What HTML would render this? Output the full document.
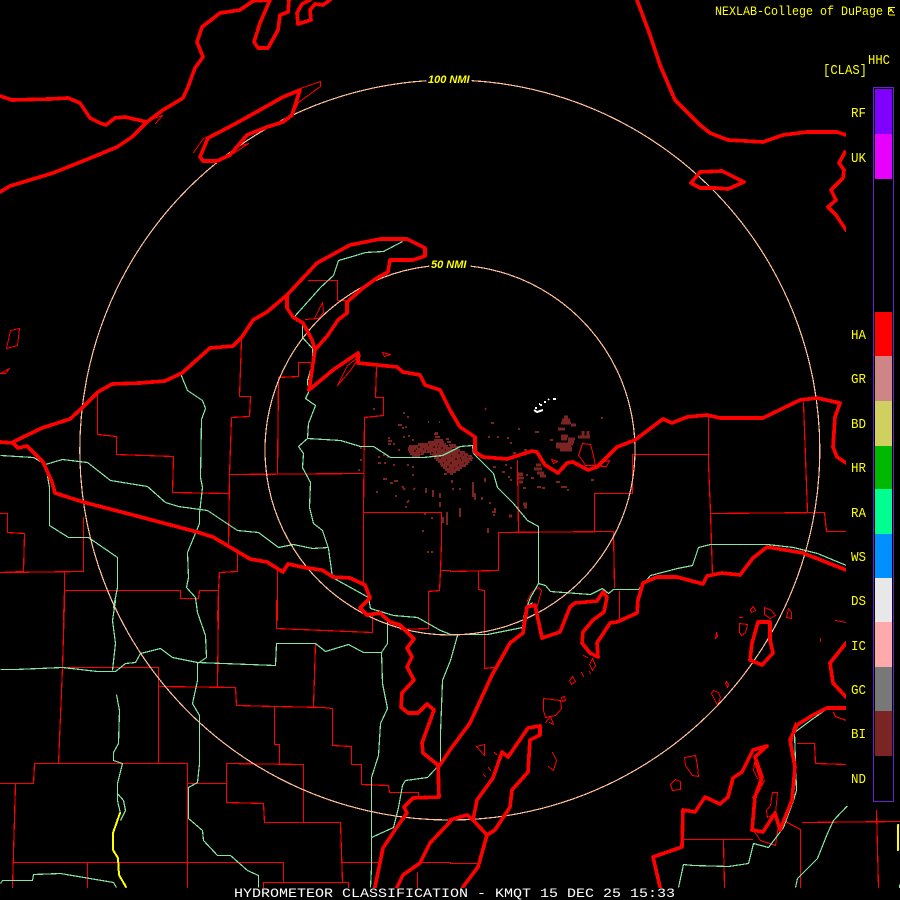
<!DOCTYPE html>
<html><head><meta charset="utf-8"><style>
html,body{margin:0;padding:0;background:#000;width:900px;height:900px;overflow:hidden}
svg{display:block;position:absolute;left:0;top:0}
text{font-family:"Liberation Mono",monospace}
</style></head><body>
<svg width="900" height="900" viewBox="0 0 900 900" xmlns="http://www.w3.org/2000/svg">
<defs><clipPath id="c"><path d="M0 0H846V806H900V888H0Z"/></clipPath></defs>
<rect width="900" height="900" fill="#000"/>
<g clip-path="url(#c)" fill="none" stroke-linejoin="round" stroke-linecap="round">

<!-- echoes -->
<g stroke="#7b2424" stroke-width="2" shape-rendering="crispEdges" stroke-linecap="butt">
<path d="M434 434H438M435 437H440M434 440H443M446 439H449M428 442H444M447 442H451M418 444H446M449 445H456M409 446H448M450 447H459M408 448H452M408 450H460M409 452H465M410 454H424M430 454H468M412 456H420M432 456H472M434 458H473M436 460H472M438 462H470M440 464H468M441 466H466M443 468H462M445 470H460M447 472H456M444 474H447M450 474H453"/>
<path stroke="#000" stroke-width="1" d="M412 445h1M418 447h2M423 449h1M414 451h2M428 445h1M433 447h2M426 451h1M438 444h1M441 448h2M436 452h1M431 453h2M445 450h1M449 452h2M454 449h1M443 455h2M451 456h1M458 453h2M463 455h1M467 457h1M439 458h2M446 460h1M455 459h2M461 460h1M469 461h1M443 463h1M450 463h2M458 465h1M464 463h1M447 467h2M454 468h1M420 453h1M444 443h1M437 447h1M416 449h1M460 458h1"/>
<path d="M383 479h4M390 483h3M394 481h4M402 486l3 4M376 492h2M395 496h2M415 488l-2 2M426 488v5M433 490v7M440 493v5M409 500l-2 3M405 507h2M440 502v5M452 480v3M460 488v2M453 488v2M473 482v15M475 493v7M482 497v3M490 502v2M493 511v2M485 478v4M493 467h3M502 472h3M510 480h2M460 508v9M447 512v13M443 517v6M425 513v2M432 517v2M423 530v2M427 552h2M431 552h2M495 508v5M493 515h2M488 528v5M518 475h5M518 478h6M537 487h4M542 488h3M523 488h3M403 413h2M407 417h2M400 425h2M405 427h2M402 428h2M428 422h1M439 422h1M435 433h3M388 438h2M388 441h4M393 444h2M388 444h3M398 450h2M403 437h2M408 436h2M412 440h2M378 457h2M383 455h2M387 457h2M378 463h3M384 463h2M393 465h2M407 465h2M412 467h2M412 475h2M360 448h2M360 460h2M358 470h2M373 409h2M398 425h2M485 410l1-2M491 423h3M518 429h2M536 432h3M488 437h2M507 438h2M510 443h2M513 453h3M508 477h2M526 475h2M531 478h3M536 469h5M536 465h4M540 473h4M505 465h2M510 468h2"/>
<path stroke-width="3" d="M564 417h4M562 420h8M561 423h10M571 425h5M558 429h7M561 436h7M561 439h6M568 439h7M568 442h6M578 437h12M583 431v5M588 431v6M556 444h17M556 447h15M560 450h12M566 448h6M536 465h5M534 469h8M537 473h7M540 476h6M518 474h5M518 478h5M519 482h4M523 504h4M524 507h3M509 516h3"/>
<path d="M550 440h3M535 432h2M524 450h3M497 437h2M591 480h3M601 418h2M556 482h4M561 487h6M567 490h2"/>
</g>
<path d="M534 410l3 2 3-1 3-1M535 408h2M540 405h2M544 402h2M548 400l1-1M553 399h3M539 404h1" stroke="#fff" stroke-width="2" shape-rendering="crispEdges" stroke-linecap="butt"/>

<!-- thin county lines -->
<g stroke="#f00" stroke-width="1.2" shape-rendering="crispEdges" stroke-linecap="square" transform="translate(.5 .5)">
<path d="M241 340L239 396H250L249 416L231 417L229 474L228 547M97 395V434L116 436V454L173 456L172 492L228 493M229 474L363 473M278 377L277 473M278 377L298 376V362H310M376 367L375 397H383V415L364 417L363 512V583M350 473H363M363 512H441V542L440 570H450M440 570L439 590L428 591V620M0 513H7V532L24 533L23 571L0 572M0 572L83 571V517M64 572V590L63 620M64 590H180V598H198L199 590H218L219 572L237 571V553M218 591L217 620M277 570V620M64 600L62 667L58 763M62 667H158V763M158 686L235 687L236 705L275 706L323 707L332 708V745L351 746V764H361V784L388 785L389 792H418V797M274 707V744H279V763M313 706L315 643M276 600V628L372 632V615M428 600V628L400 629M218 600L217 686M0 783H33L34 763H187V887M187 783H226V763M226 783V802L263 803L264 822H340L342 882M226 763L303 764V822M15 783L12 887M13 862L283 862V882H263V887M283 882H348V887M87 862V887M342 862H380M417 872V887M422 862H450M484 600V668L493 667M450 863H478M619 591V620M797 743H814L815 763L846 764M833 712L835 716L846 720M683 839H752M723 840L724 887M783 820L800 829V887M802 822L900 821M876 810L878 887M708 417V463L710 512L712 575M632 454H708M632 454V493M594 493H632M594 493V531M498 532L613 531L614 587M498 532V570L450 571M478 571V589L484 590V620M517 460L518 531M803 402L807 512M710 513L824 512L826 531H846M308 280H337V300H347"/>
<path stroke-width="1" d="M193 152L203 138L208 136M300 88L320 81V86L298 102L293 113M240 145L248 143L233 153M12 100L0 95M145 121L162 115L155 123M132 137L118 146M100 155L93 157M337 385L350 370L360 355L347 365ZM314 318L322 302L323 312L318 318L305 319"/>
<path stroke-width="1" d="M10 330L19 328L17 345L6 348ZM0 373L9 368L5 373Z"/>
<path stroke-width="1" d="M382 352L390 354L384 356ZM578 455L582 443L590 444L593 455L595 465L585 465L582 460ZM551 459L553 463L557 461ZM601 462L609 460L606 466L601 466Z"/>
<path stroke-width="1" d="M543 698L560 700L561 708L555 715L545 717L543 710ZM564 696L565 700L562 701L561 697ZM545 722L550 716L553 724L549 722M476 746L484 744L484 755ZM494 752L496 754M488 767L490 770M483 774L485 776M684 757L695 755L697 765L698 776L692 775L685 765ZM675 779L680 781L680 789L672 790L670 784ZM713 690L718 692L720 697L717 705L711 693ZM726 681L728 684L727 687L725 683ZM739 623L747 624L745 632L741 635L739 632ZM764 607L771 610L775 615L770 618L764 614ZM788 608L791 612L791 618L786 617ZM753 606L755 610L751 612L750 609ZM739 617L742 617M716 632L717 636L715 638ZM835 620L846 622M820 638V641M572 676L575 681L571 684L569 680ZM592 658L595 665L592 670L589 664ZM581 672L583 676M589 671L590 673M583 655L587 657M772 792L777 792L775 813L767 817L766 810L770 805ZM764 780L758 792L752 797ZM759 777L754 762L753 770L757 778ZM792 730L795 722L791 745ZM753 830L760 840L775 845L778 825M552 752L556 760L553 770L548 766M527 600L531 592L538 587L541 590L537 605L529 606Z"/>
</g>

<!-- green rivers/state lines -->
<g stroke="#83e6a2" stroke-width="1.2" shape-rendering="crispEdges" stroke-linecap="butt" transform="translate(.5 .5)">
<path d="M295 320V315L320 287L333 275L338 260L352 256L365 252L383 251L402 241M295 320L302 322V337L312 348V363L307 380L308 392L305 398L315 405L308 423L307 438L298 446L303 453L302 467L310 482L309 507L313 523L322 530L328 548L332 577L350 587L368 597L370 608L393 615L417 617L440 630L450 634H487L522 627L525 608L532 602M307 438L340 440L360 446L373 446L390 457L423 457L442 455L460 446L472 445L473 453L493 473L497 487L513 503L527 520L538 526V583L530 597L527 605L523 617M538 583L545 585L550 591L590 594L602 588L608 593L613 589H638L650 575L677 568L692 565L698 547L710 544H767L793 547L817 553L846 565M0 455L33 457L45 464L62 459L87 462L110 480L147 486L165 502L178 506L207 510L237 530L258 532L278 547L293 544L312 548L328 547M45 464L49 487V525L68 537L88 537L117 557V587L113 607L115 600L112 620L115 643L112 670M180 373L187 390L202 400L205 408L201 419L200 477L202 487L199 513V523L187 552L188 577L186 587L195 597L197 612L205 635L206 657L197 663V680L192 703L199 715V763L197 782L188 787V818L202 830L203 840L217 855H230L247 870L258 875V887M0 669H15L62 667L97 671H115L125 663L135 662L140 653L160 648L172 657L197 662L275 665L276 643H315L325 651L348 644L363 652H381L387 643V620L382 613M381 652L382 683L387 708L380 723L378 755L371 777V867L370 887M457 635L450 660L442 680L440 733V763L427 777L405 780L402 785L398 807L393 827L371 837M116 694L119 710L118 743L113 752V760L122 763L117 783V800L120 813M117 793L123 800L125 810L120 820M0 883L2 880H32L33 874L60 873L113 882L116 887M678 887L683 864L693 865L728 866L748 863L753 843L768 847L783 827L793 800L796 790L794 732L810 720L827 708H846M795 887L797 878L817 858L827 833L833 820L850 802M899 884V888"/>
</g>
<path d="M120 813L113 833V850L118 858L119 875L126 887M898 825V850" stroke="#ff0" stroke-width="2" fill="none" shape-rendering="crispEdges"/>

<!-- rings -->
<g stroke="#ffc098" stroke-width="1.2" fill="none" shape-rendering="crispEdges">
<path d="M472 80.7A370 370 0 1 1 426 80.8"/>
<path d="M471 266.2A185 185 0 1 1 429 266.2"/>
</g>
<g fill="#ff0" font-style="italic" font-weight="bold" font-size="11">
<text x="428" y="83" style="font-family:'Liberation Sans',sans-serif">100 NMI</text>
<text x="431" y="268" style="font-family:'Liberation Sans',sans-serif">50 NMI</text>
</g>

<!-- thick coasts -->
<g stroke="#f00" stroke-width="3.7" shape-rendering="crispEdges">
<path d="M0 96L12 100L50 99L68 98L80 103L90 118L100 123L106 125L115 118L125 117L147 122L163 110L183 98L188 87L195 68L203 57L197 42L202 27L220 13L240 10L253 1L270 0L260 23L254 42L258 48L268 48L278 30L280 15L288 12L289 0"/>
<path d="M0 192L10 186L53 173L93 157L117 147L132 137L147 122"/>
<path d="M330 0L323 5L315 4L310 10L311 20L298 24L297 13L302 4L310 0"/>
<path d="M200 157L208 138L233 125L260 110L283 97L300 90L292 115L283 122L267 127L247 135L230 155L217 161L203 161Z"/>
<path d="M13 442L42 428L70 419L82 408L98 392L112 384L140 383L165 381L182 373L210 348L233 346L242 337L253 320L267 312L287 295L317 263L350 245L380 239H407L425 248V256L413 260H390L388 272L377 278L363 288L347 302V313L338 320L328 335L315 350"/>
<path d="M287 295V308L293 317L303 323L312 340L315 350L309 390L333 370L358 353V363L397 367L403 372L420 375L425 385L440 390L450 410L460 427L475 437V452L483 457L507 459L532 451L537 452L545 465L558 473L567 463L573 462L588 470L597 467L617 447L635 440L663 419L672 423L687 417L707 415L720 418L763 418L800 400L817 398L840 403L835 417L833 447L837 457L846 463"/>
<path d="M0 442L13 443L18 448L27 446L43 462L52 482L55 493L83 502L133 515L197 532L213 537L250 559L267 562L283 572L288 564L307 568L322 570L333 577L350 578L365 585L370 598L360 608L367 615L380 613L390 622L400 625L414 639L407 648L412 657L407 667L414 680L402 693L401 707L408 713H418L427 704L434 710L422 743L423 753L438 765L439 797L413 798L404 807L407 813L397 827L383 848L375 887"/>
<path d="M440 765L450 750L470 723L492 675L510 643L523 633L527 607L535 605L542 638L560 632L570 607L575 603L597 601L603 592L607 597L604 612L593 620L583 632L582 643L590 653L598 657L597 643L610 623L617 622L637 613L638 600L643 583L657 577H677L703 584L707 576L722 573L740 575L753 558L767 547L803 553L846 570"/>
<path d="M463 887L478 867L487 835L473 820L477 800L493 778L502 752L508 757L528 728L540 726V735L530 740L528 772L512 790L510 807L495 830L487 835M450 820L467 815L473 820"/>
<path d="M397 887L403 875L420 863L430 843L450 822"/>
<path d="M660 887L653 857L682 847L683 810L695 812L705 797L720 804L728 797L733 778L742 772L753 750L767 746L755 757L762 777L755 797L752 830L763 832L775 813L780 830L792 800L795 767L790 740L797 725L813 715L827 708H846"/>
<path d="M758 622H770V640L773 653L762 665L750 660L752 643Z"/>
<path d="M846 643L830 663L833 683L846 697"/>
<path d="M637 0L650 35L660 65L675 100L700 125L710 133L728 140L763 142L783 135L807 132H837L846 135"/>
<path d="M845 152L839 163L844 170L843 178L831 190L836 200L828 207L836 215L846 230"/>
<path d="M691 183L700 172L722 171L744 182L728 189L715 188H700Z"/>
</g>
</g>

<!-- colorbar -->
<g shape-rendering="crispEdges">
<rect x="873.5" y="87.5" width="20" height="714" fill="#000" stroke="#6a1fd0"/>
<rect x="875" y="89" width="17" height="45" fill="#8000ff"/>
<rect x="875" y="134" width="17" height="45" fill="#e600ff"/>
<rect x="875" y="312" width="17" height="44" fill="#ff0000"/>
<rect x="875" y="356" width="17" height="45" fill="#cf8585"/>
<rect x="875" y="401" width="17" height="45" fill="#d0d060"/>
<rect x="875" y="446" width="17" height="43" fill="#00b800"/>
<rect x="875" y="489" width="17" height="45" fill="#00ff90"/>
<rect x="875" y="534" width="17" height="44" fill="#0090ff"/>
<rect x="875" y="578" width="17" height="44" fill="#e8e8e8"/>
<rect x="875" y="622" width="17" height="45" fill="#ffaaaa"/>
<rect x="875" y="667" width="17" height="44" fill="#787878"/>
<rect x="875" y="711" width="17" height="45" fill="#7b2424"/>
</g>

<!-- text -->
<g fill="#ff0" font-size="13">
<text x="715" y="15" textLength="168" lengthAdjust="spacingAndGlyphs">NEXLAB-College of DuPage</text>
<text x="868" y="64" font-size="14" textLength="22" lengthAdjust="spacingAndGlyphs">HHC</text>
<text x="823" y="74" font-size="14" textLength="44" lengthAdjust="spacingAndGlyphs">[CLAS]</text>
<g font-size="14">
<text x="851" y="117" textLength="15" lengthAdjust="spacingAndGlyphs">RF</text>
<text x="851" y="162" textLength="15" lengthAdjust="spacingAndGlyphs">UK</text>
<text x="851" y="339" textLength="15" lengthAdjust="spacingAndGlyphs">HA</text>
<text x="851" y="383" textLength="15" lengthAdjust="spacingAndGlyphs">GR</text>
<text x="851" y="428" textLength="15" lengthAdjust="spacingAndGlyphs">BD</text>
<text x="851" y="472" textLength="15" lengthAdjust="spacingAndGlyphs">HR</text>
<text x="851" y="517" textLength="15" lengthAdjust="spacingAndGlyphs">RA</text>
<text x="851" y="561" textLength="15" lengthAdjust="spacingAndGlyphs">WS</text>
<text x="851" y="605" textLength="15" lengthAdjust="spacingAndGlyphs">DS</text>
<text x="851" y="650" textLength="15" lengthAdjust="spacingAndGlyphs">IC</text>
<text x="851" y="694" textLength="15" lengthAdjust="spacingAndGlyphs">GC</text>
<text x="851" y="738" textLength="15" lengthAdjust="spacingAndGlyphs">BI</text>
<text x="851" y="783" textLength="15" lengthAdjust="spacingAndGlyphs">ND</text>
</g>
</g>
<path d="M888.5 15V7.5H895M889 8L894 13M889 12L892 9M889 15H895" stroke="#ff0" fill="none" shape-rendering="crispEdges"/>
<text x="234" y="897" fill="#fff" font-size="13" textLength="441" lengthAdjust="spacingAndGlyphs">HYDROMETEOR CLASSIFICATION - KMQT 15 DEC 25 15:33</text>
</svg>
</body></html>
